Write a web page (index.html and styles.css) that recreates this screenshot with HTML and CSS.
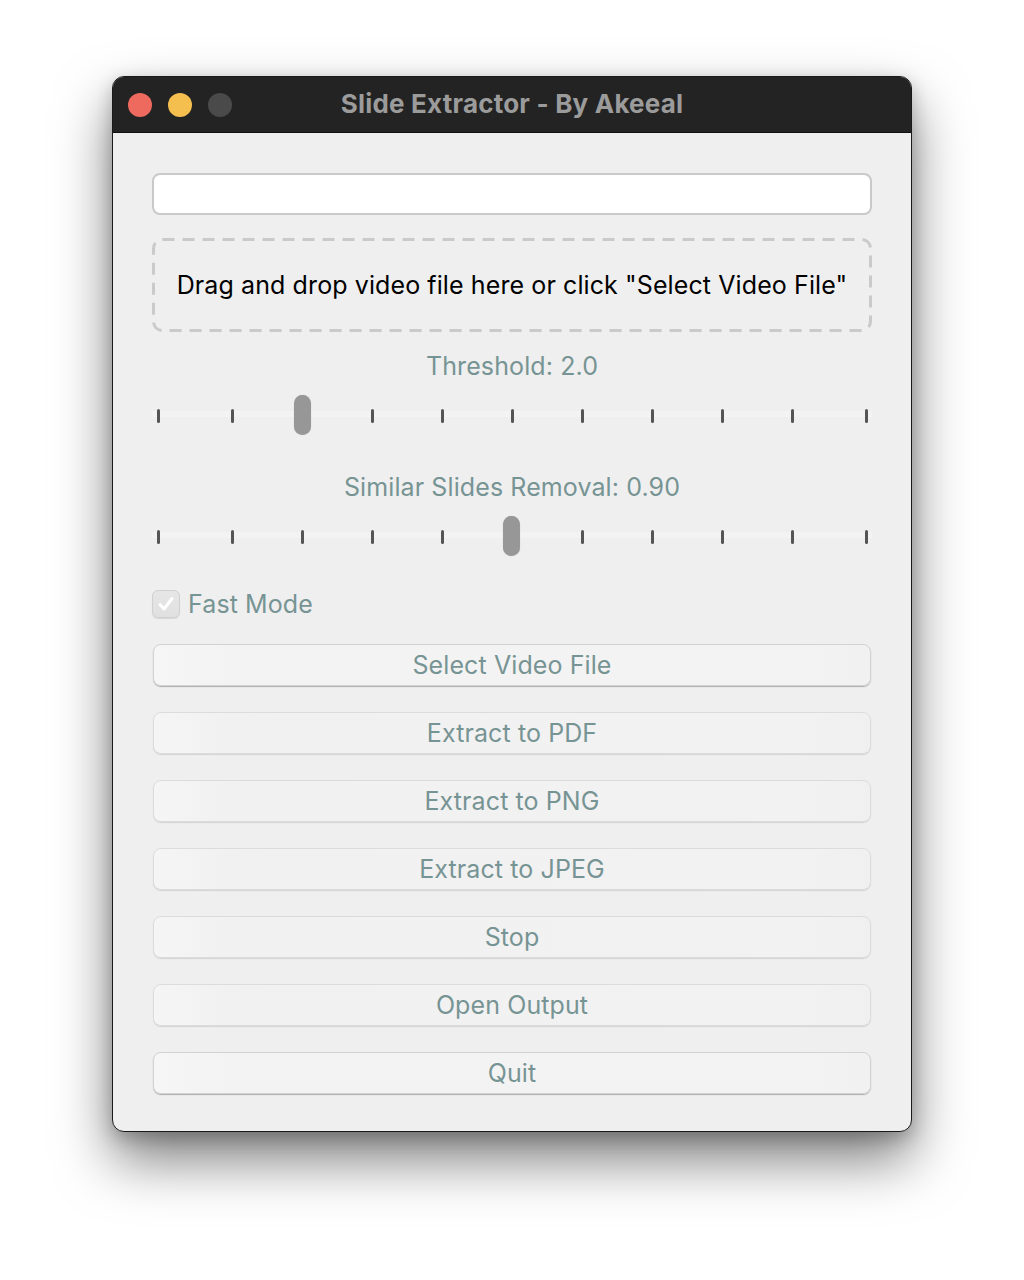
FILE: index.html
```html
<!DOCTYPE html>
<html lang="en">
<head>
<meta charset="utf-8">
<title>Slide Extractor - By Akeeal</title>
<link rel="stylesheet" href="styles.css">
</head>
<body>
<div class="window">
  <div class="titlebar">
    <div class="lights">
      <span class="light red"></span>
      <span class="light yellow"></span>
      <span class="light gray"></span>
    </div>
    <div class="title">Slide Extractor - By Akeeal</div>
  </div>
  <div class="content">
    <div class="path-input"></div>
    <div class="dropzone">
      <svg class="dash" width="720" height="94" viewBox="0 0 720 94"><rect x="1.5" y="1.5" width="717" height="91" rx="9" ry="9" fill="none" stroke="#cacaca" stroke-width="3" stroke-dasharray="12 8"/></svg>
      <span class="drop-text">Drag and drop video file here or click "Select Video File"</span>
    </div>

    <div class="label label-first">Threshold: 2.0</div>
    <div class="slider">
      <div class="track"></div>
      <span class="tick"></span><span class="tick"></span><span class="tick"></span><span class="tick"></span><span class="tick"></span><span class="tick"></span><span class="tick"></span><span class="tick"></span><span class="tick"></span><span class="tick"></span><span class="tick"></span>
      <span class="thumb" style="left:142px"></span>
    </div>

    <div class="label label-second">Similar Slides Removal: 0.90</div>
    <div class="slider">
      <div class="track"></div>
      <span class="tick"></span><span class="tick"></span><span class="tick"></span><span class="tick"></span><span class="tick"></span><span class="tick"></span><span class="tick"></span><span class="tick"></span><span class="tick"></span><span class="tick"></span><span class="tick"></span>
      <span class="thumb" style="left:351px"></span>
    </div>

    <label class="check">
      <span class="box">
        <svg width="20" height="20" viewBox="0 0 20 20"><path d="M4 10.5 L8 15 L16 4.5" fill="none" stroke="#ffffff" stroke-width="3" stroke-linecap="round" stroke-linejoin="round"/></svg>
      </span>
      <span class="check-text">Fast Mode</span>
    </label>

    <div class="buttons">
      <div class="btn btn-active">Select Video File</div>
      <div class="btn">Extract to PDF</div>
      <div class="btn">Extract to PNG</div>
      <div class="btn">Extract to JPEG</div>
      <div class="btn">Stop</div>
      <div class="btn">Open Output</div>
      <div class="btn btn-active">Quit</div>
    </div>
  </div>
</div>
</body>
</html>
```

FILE: styles.css
```css
html, body {
  margin: 0;
  padding: 0;
  background: #ffffff;
}
body {
  font-family: Inter, "Noto Sans", "Liberation Sans", sans-serif;
  padding-top: 76px;
  min-height: 1204px;
}
.window {
  width: 798px;
  height: 1054px;
  margin: 0 auto;
  border: 1px solid #1a1a1a;
  border-radius: 12px;
  background: #efefef;
  overflow: hidden;
  box-shadow: 0 28px 55px rgba(0, 0, 0, 0.5), 0 6px 18px rgba(0, 0, 0, 0.22);
}
.titlebar {
  height: 55px;
  background: #232323;
  border-bottom: 1px solid #111;
  position: relative;
  display: flex;
  align-items: center;
}
.lights {
  display: flex;
  gap: 16px;
  padding-left: 15px;
}
.light {
  width: 24px;
  height: 24px;
  border-radius: 50%;
  display: block;
}
.red { background: #ee6a5e; }
.yellow { background: #f4bf4f; }
.gray { background: #4a4a4a; }
.title {
  position: absolute;
  left: 0;
  right: 0;
  top: 0;
  line-height: 54px;
  text-align: center;
  color: #9b9b9b;
  font-weight: 700;
  font-size: 26px;
  letter-spacing: 0.2px;
  pointer-events: none;
}
.content {
  padding: 40px 39px 0 39px;
  display: flex;
  flex-direction: column;
}
.path-input {
  height: 38px;
  border: 2px solid #c9c9c9;
  border-radius: 8px;
  background: #ffffff;
}
.dropzone {
  position: relative;
  margin-top: 23px;
  height: 94px;
  display: flex;
  align-items: center;
  justify-content: center;
}
.dash {
  position: absolute;
  left: 0;
  top: 0;
}
.drop-text {
  position: relative;
  color: #000;
  font-size: 25px;
  letter-spacing: 0.1px;
}
.label {
  text-align: center;
  color: #779494;
  font-size: 25px;
  letter-spacing: 0.1px;
  line-height: 30px;
}
.label-first { margin-top: 19px; }
.label-second { margin-top: 37px; }
.slider {
  position: relative;
  height: 40px;
  margin-top: 14px;
  display: flex;
  align-items: center;
}
.track {
  position: absolute;
  left: 0;
  right: 0;
  top: 16px;
  height: 6px;
  background: #f3f3f3;
}
.tick {
  position: relative;
  width: 3px;
  height: 14px;
  border-radius: 1.5px;
  background: #555555;
  margin-left: 67px;
  margin-top: 1px;
}
.tick:nth-child(2) { margin-left: 5px; }
.tick:nth-child(3), .tick:nth-child(12) { margin-left: 71px; }
.thumb {
  position: absolute;
  top: 0;
  width: 17px;
  height: 40px;
  border-radius: 9px;
  background: #979797;
  box-shadow: 0 0 1px rgba(0, 0, 0, 0.25);
}
.check {
  margin-top: 34px;
  display: flex;
  align-items: center;
  gap: 8px;
  height: 28px;
}
.box {
  width: 26px;
  height: 26px;
  border: 1px solid #d0d0d0;
  border-radius: 6px;
  background: linear-gradient(#e6e6e6, #e0e0e0);
  display: flex;
  align-items: center;
  justify-content: center;
  box-shadow: 0 1px 1px rgba(0, 0, 0, 0.1);
}
.check-text {
  color: #779494;
  font-size: 25px;
  letter-spacing: 0.1px;
}
.buttons {
  margin-top: 26px;
  display: flex;
  flex-direction: column;
  gap: 26px;
  padding: 0 1px;
}
.btn {
  height: 40px;
  border: 1px solid #dcdcdc;
  border-radius: 8px;
  background: linear-gradient(to right, #f5f5f5, #f1f1f1 10%, #f2f2f2 90%, #f0f0f0);
  box-shadow: 0 1px 1px rgba(0, 0, 0, 0.12);
  display: flex;
  align-items: center;
  justify-content: center;
  color: #779494;
  font-size: 25px;
  letter-spacing: 0.1px;
}
.btn-active {
  border-color: #d2d2d2;
  background: linear-gradient(to right, #f6f6f6, #f3f3f3 10%, #f3f3f3 90%, #f1f1f1);
  box-shadow: 0 1px 1px rgba(0, 0, 0, 0.28);
}
```
